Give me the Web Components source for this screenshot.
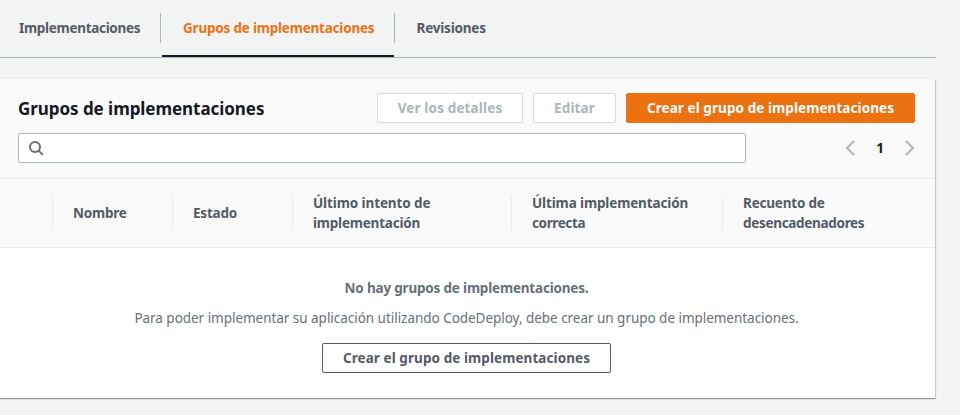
<!DOCTYPE html>
<html lang="es">
<head>
<meta charset="utf-8">
<title>Grupos de implementaciones</title>
<style>
html,body{margin:0;height:100%;overflow:hidden;background:#f2f3f3}
body{font:13.5px/20px "Noto Sans","Open Sans",sans-serif;color:#16191f}
</style>
</head>
<body>
<deploy-page>
  <tab-bar slot="tabs">
    <tab-item style="width:161px;--pad:19px;--ls:-.3px">Implementaciones</tab-item>
    <tab-item active style="width:234px;--pad:22px;--ls:-.205px">Grupos de implementaciones</tab-item>
    <tab-item style="--pad:21.5px;--ls:-.2px">Revisiones</tab-item>
  </tab-bar>
  <data-panel>
    <span slot="title">Grupos de implementaciones</span>
    <ui-button slot="actions" kind="disabled" style="width:146px;--ls:.15px">Ver los detalles</ui-button>
    <ui-button slot="actions" kind="disabled" style="width:83px;--ls:.14px">Editar</ui-button>
    <ui-button slot="actions" kind="primary" style="width:289px;--ls:.08px">Crear el grupo de implementaciones</ui-button>
    <search-field slot="tools"></search-field>
    <page-nav slot="tools">1</page-nav>
    <column-head slot="columns" style="letter-spacing:-.2px">Nombre</column-head>
    <column-head slot="columns" style="letter-spacing:-.2px">Estado</column-head>
    <column-head slot="columns"><span style="letter-spacing:-.1px">Último intento de</span><br><span style="letter-spacing:-.21px">implementación</span></column-head>
    <column-head slot="columns"><span style="letter-spacing:-.13px">Última implementación</span><br><span style="letter-spacing:-.38px">correcta</span></column-head>
    <column-head slot="columns"><span style="letter-spacing:-.2px">Recuento de</span><br><span style="letter-spacing:-.31px">desencadenadores</span></column-head>
    <empty-state slot="body">
      <span slot="heading">No hay grupos de implementaciones.</span>
      <span>Para poder implementar su aplicación utilizando CodeDeploy, debe crear un grupo de implementaciones.</span>
      <ui-button slot="action" style="width:289px;--ls:.08px">Crear el grupo de implementaciones</ui-button>
    </empty-state>
  </data-panel>
</deploy-page>
<script>
function define(name, html) {
  const template = document.createElement('template');
  template.innerHTML = html;
  customElements.define(name, class extends HTMLElement {
    constructor() {
      super();
      this.attachShadow({ mode: 'open' }).append(template.content.cloneNode(true));
    }
  });
}

define('deploy-page', `<style>
:host{display:flex;flex-direction:column;gap:21px;width:936px}
</style><slot name="tabs"></slot><slot></slot>`);

define('tab-bar', `<style>
:host{display:flex;height:57px;border-bottom:1px solid #aab7b8}
</style><slot></slot>`);

define('tab-item', `<style>
:host{display:flex;height:57px;font-weight:700;color:#545b64;letter-spacing:var(--ls)}
.label{flex:1;display:flex;flex-direction:column;justify-content:space-between}
.text{padding:18px 0 0 var(--pad);white-space:nowrap}
.line{height:2px;margin-left:1px}
.sep{width:1px;height:30px;margin-top:13px;background:#aab7b8}
:host(:last-child) .sep{display:none}
:host([active]) .text{color:#ec7211}
:host([active]) .line{background:#16191f}
</style><div class="label"><div class="text"><slot></slot></div><div class="line"></div></div><div class="sep"></div>`);

define('data-panel', `<style>
:host{display:flex;flex-direction:column;width:935px;height:319px;background:#fff;box-shadow:0 1px 1px 0 rgba(0,28,36,.3),1px 1px 1px 0 rgba(0,28,36,.15),0 -1px 0 0 #eaeded}
header{box-sizing:border-box;height:100px;padding:14px 20px 0 18px;background:#fafafa;border-bottom:1px solid #eaeded}
.row{display:flex;justify-content:space-between;align-items:center;height:30px}
.tools{margin-top:10px}
h2{margin:0;padding-top:1px;font-size:17px;line-height:22px;font-weight:700;letter-spacing:-.05px;white-space:nowrap}
.actions{display:flex;gap:10px}
.columns{display:grid;grid-template-columns:120px 120px 219px 211px 1fr;align-items:center;box-sizing:border-box;height:69px;padding-left:52px;background:#fafafa;border-bottom:1px solid #eaeded}
</style>
<header>
  <div class="row"><h2><slot name="title"></slot></h2><div class="actions"><slot name="actions"></slot></div></div>
  <div class="row tools"><slot name="tools"></slot></div>
</header>
<div class="columns"><slot name="columns"></slot></div>
<slot name="body"></slot>`);

define('ui-button', `<style>
:host{display:flex;align-items:center;justify-content:center;box-sizing:border-box;height:30px;border:1px solid #545b64;border-radius:2px;background:#fff;color:#545b64;font-weight:700;letter-spacing:var(--ls);white-space:nowrap}
:host([kind=disabled]){border-color:#d5dbdb;color:#aab7b8}
:host([kind=primary]){border-color:#ec7211;background:#ec7211;color:#fff}
</style><slot></slot>`);

define('search-field', `<style>
:host{display:flex;align-items:center;box-sizing:border-box;width:728px;height:30px;padding-left:9px;border:1px solid #aab7b8;border-radius:2px;background:#fff}
svg{display:block;width:16px;height:16px;fill:none;stroke:#687078;stroke-width:2}
</style><svg viewBox="0 0 16 16"><circle cx="7" cy="7" r="5"/><path d="M10.6 10.6l4.2 4.2"/></svg>`);

define('page-nav', `<style>
:host{display:flex;align-items:center;justify-content:space-between;width:70px;font-weight:700}
svg{display:block;width:10px;height:16px;fill:none;stroke:#aab7b8;stroke-width:2}
</style><svg viewBox="0 0 10 16"><path d="M9 1L2 8l7 7"/></svg><slot></slot><svg viewBox="0 0 10 16"><path d="M1 1l7 7-7 7"/></svg>`);

define('column-head', `<style>
:host{display:flex;align-items:center;height:34px;padding-left:20px;border-left:1px solid #eaeded;font-weight:700;color:#545b64;white-space:nowrap}
</style><div><slot></slot></div>`);

define('empty-state', `<style>
:host{display:flex;flex-direction:column;align-items:center;gap:10px;padding:30px 2px 0 0;color:#687078;white-space:nowrap}
.heading{font-weight:700;letter-spacing:-.19px}
.text{letter-spacing:-.033px}
.action{padding-top:5px}
</style><div class="heading"><slot name="heading"></slot></div><div class="text"><slot></slot></div><div class="action"><slot name="action"></slot></div>`);
</script>
</body>
</html>
